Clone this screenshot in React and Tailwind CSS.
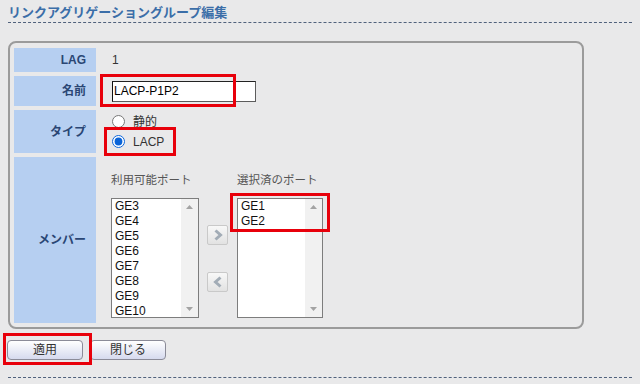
import React from 'react';

const FONT = "font-['Liberation_Sans','Noto_Sans_CJK_JP',sans-serif]";

const AVAILABLE = ['GE3', 'GE4', 'GE5', 'GE6', 'GE7', 'GE8', 'GE9', 'GE10'];
const SELECTED = ['GE1', 'GE2'];

function Label({ children, className = '' }) {
  return (
    <div className={`bg-[#b6cff1] flex items-center justify-end pr-[10px] text-[12px] font-bold text-[#2a4674] ${className}`}>
      {children}
    </div>
  );
}

function Mark({ className }) {
  return <div className={`absolute border-[3px] border-[#e8000b] pointer-events-none ${className}`} />;
}

function PortList({ items, width }) {
  return (
    <div className={`${width} h-[120px] border border-[#7d7d7d] bg-white flex`}>
      <div className="flex-1 pl-[3px] text-[12px] leading-[15px] text-[#111]">
        {items.map(p => <div key={p}>{p}</div>)}
      </div>
      <div className="w-[17px] bg-[#f1f1f1] flex flex-col justify-between items-center py-[6px]">
        <svg width="7" height="4" viewBox="0 0 7 4"><path d="M0 4L3.5 0L7 4Z" fill="#a3a3a3" /></svg>
        <svg width="7" height="4" viewBox="0 0 7 4"><path d="M0 0L3.5 4L7 0Z" fill="#a3a3a3" /></svg>
      </div>
    </div>
  );
}

function MoveButton({ dir }) {
  return (
    <button className="w-[21px] h-[20px] rounded-[2px] border border-[#c9c9c9] bg-gradient-to-b from-[#f8f8f8] to-[#e2e2e2] flex items-center justify-center">
      <svg width="12" height="12" viewBox="0 0 12 12">
        <path d={dir === 'right' ? 'M3.5 1.5L8.5 6L3.5 10.5' : 'M8.5 1.5L3.5 6L8.5 10.5'} fill="none" stroke="#a2acb6" strokeWidth="3" />
      </svg>
    </button>
  );
}

function PushButton({ children }) {
  return (
    <button className="w-[76px] h-[20px] rounded-[4px] border border-[#8b8b98] bg-gradient-to-b from-white to-[#d6daee] text-[12px] text-[#333] leading-none">
      {children}
    </button>
  );
}

export default function App() {
  return (
    <div className={`w-[640px] h-[384px] overflow-hidden bg-[#e9e9ea] px-2 pt-[4px] ${FONT}`}>
      <h1 className="text-[13px] leading-[17px] font-bold text-[#3b6ea8]">リンクアグリゲーショングループ編集</h1>
      <div className="mt-[1px] border-t border-dashed border-[#51627c]" />

      <div className="mt-[18px] w-[576px] h-[288px] border-2 border-[#9b9b9b] rounded-[8px] px-[4px] pt-[5px]">
        <div className="grid grid-cols-[82px_1fr] grid-rows-[24px_30px_43px_166px] gap-y-[4px]">
          <Label>LAG</Label>
          <div className="flex items-center pl-[16px] text-[12px] text-[#333]">1</div>

          <Label>名前</Label>
          <div className="relative flex items-center pl-[16px]">
            <input
              readOnly
              value="LACP-P1P2"
              className="w-[144px] h-[21px] bg-white border border-[#5c5c5c] border-l-[#111] border-t-[#222] px-[1px] text-[12px] text-black outline-none"
            />
            <Mark className="left-[4px] top-[-2px] w-[136px] h-[33px]" />
          </div>

          <Label>タイプ</Label>
          <div className="relative flex flex-col justify-center pl-[16px] text-[12px] text-[#333]">
            <label className="flex items-center h-[20px] gap-[8px]">
              <input type="radio" name="type" className="m-0 w-[13px] h-[13px] accent-[#0a64d8]" />
              <span>静的</span>
            </label>
            <label className="flex items-center h-[20px] gap-[8px]">
              <input type="radio" name="type" defaultChecked className="m-0 w-[13px] h-[13px] accent-[#0a64d8]" />
              <span>LACP</span>
            </label>
            <Mark className="left-[8px] top-[17px] w-[72px] h-[29px]" />
          </div>

          <Label>メンバー</Label>
          <div className="relative flex pl-[15px] pt-[16px] gap-[8px]">
            <div className="flex flex-col">
              <div className="text-[11.5px] leading-[14px] text-[#555] mb-[11px]">利用可能ポート</div>
              <PortList items={AVAILABLE} width="w-[88px]" />
            </div>
            <div className="flex flex-col gap-[27px] pt-[52px]">
              <MoveButton dir="right" />
              <MoveButton dir="left" />
            </div>
            <div className="flex flex-col ml-[1px]">
              <div className="text-[11.5px] leading-[14px] text-[#555] mb-[11px]">選択済のポート</div>
              <PortList items={SELECTED} width="w-[86px]" />
            </div>
            <Mark className="left-[134px] top-[36px] w-[100px] h-[39px]" />
          </div>
        </div>
      </div>

      <div className="relative mt-[11px] -ml-px flex gap-[7px]">
        <PushButton>適用</PushButton>
        <PushButton>閉じる</PushButton>
        <Mark className="left-[-4px] top-[-7px] w-[89px] h-[32px]" />
      </div>

      <div className="mt-[17px] border-t border-dashed border-[#51627c]" />
    </div>
  );
}
